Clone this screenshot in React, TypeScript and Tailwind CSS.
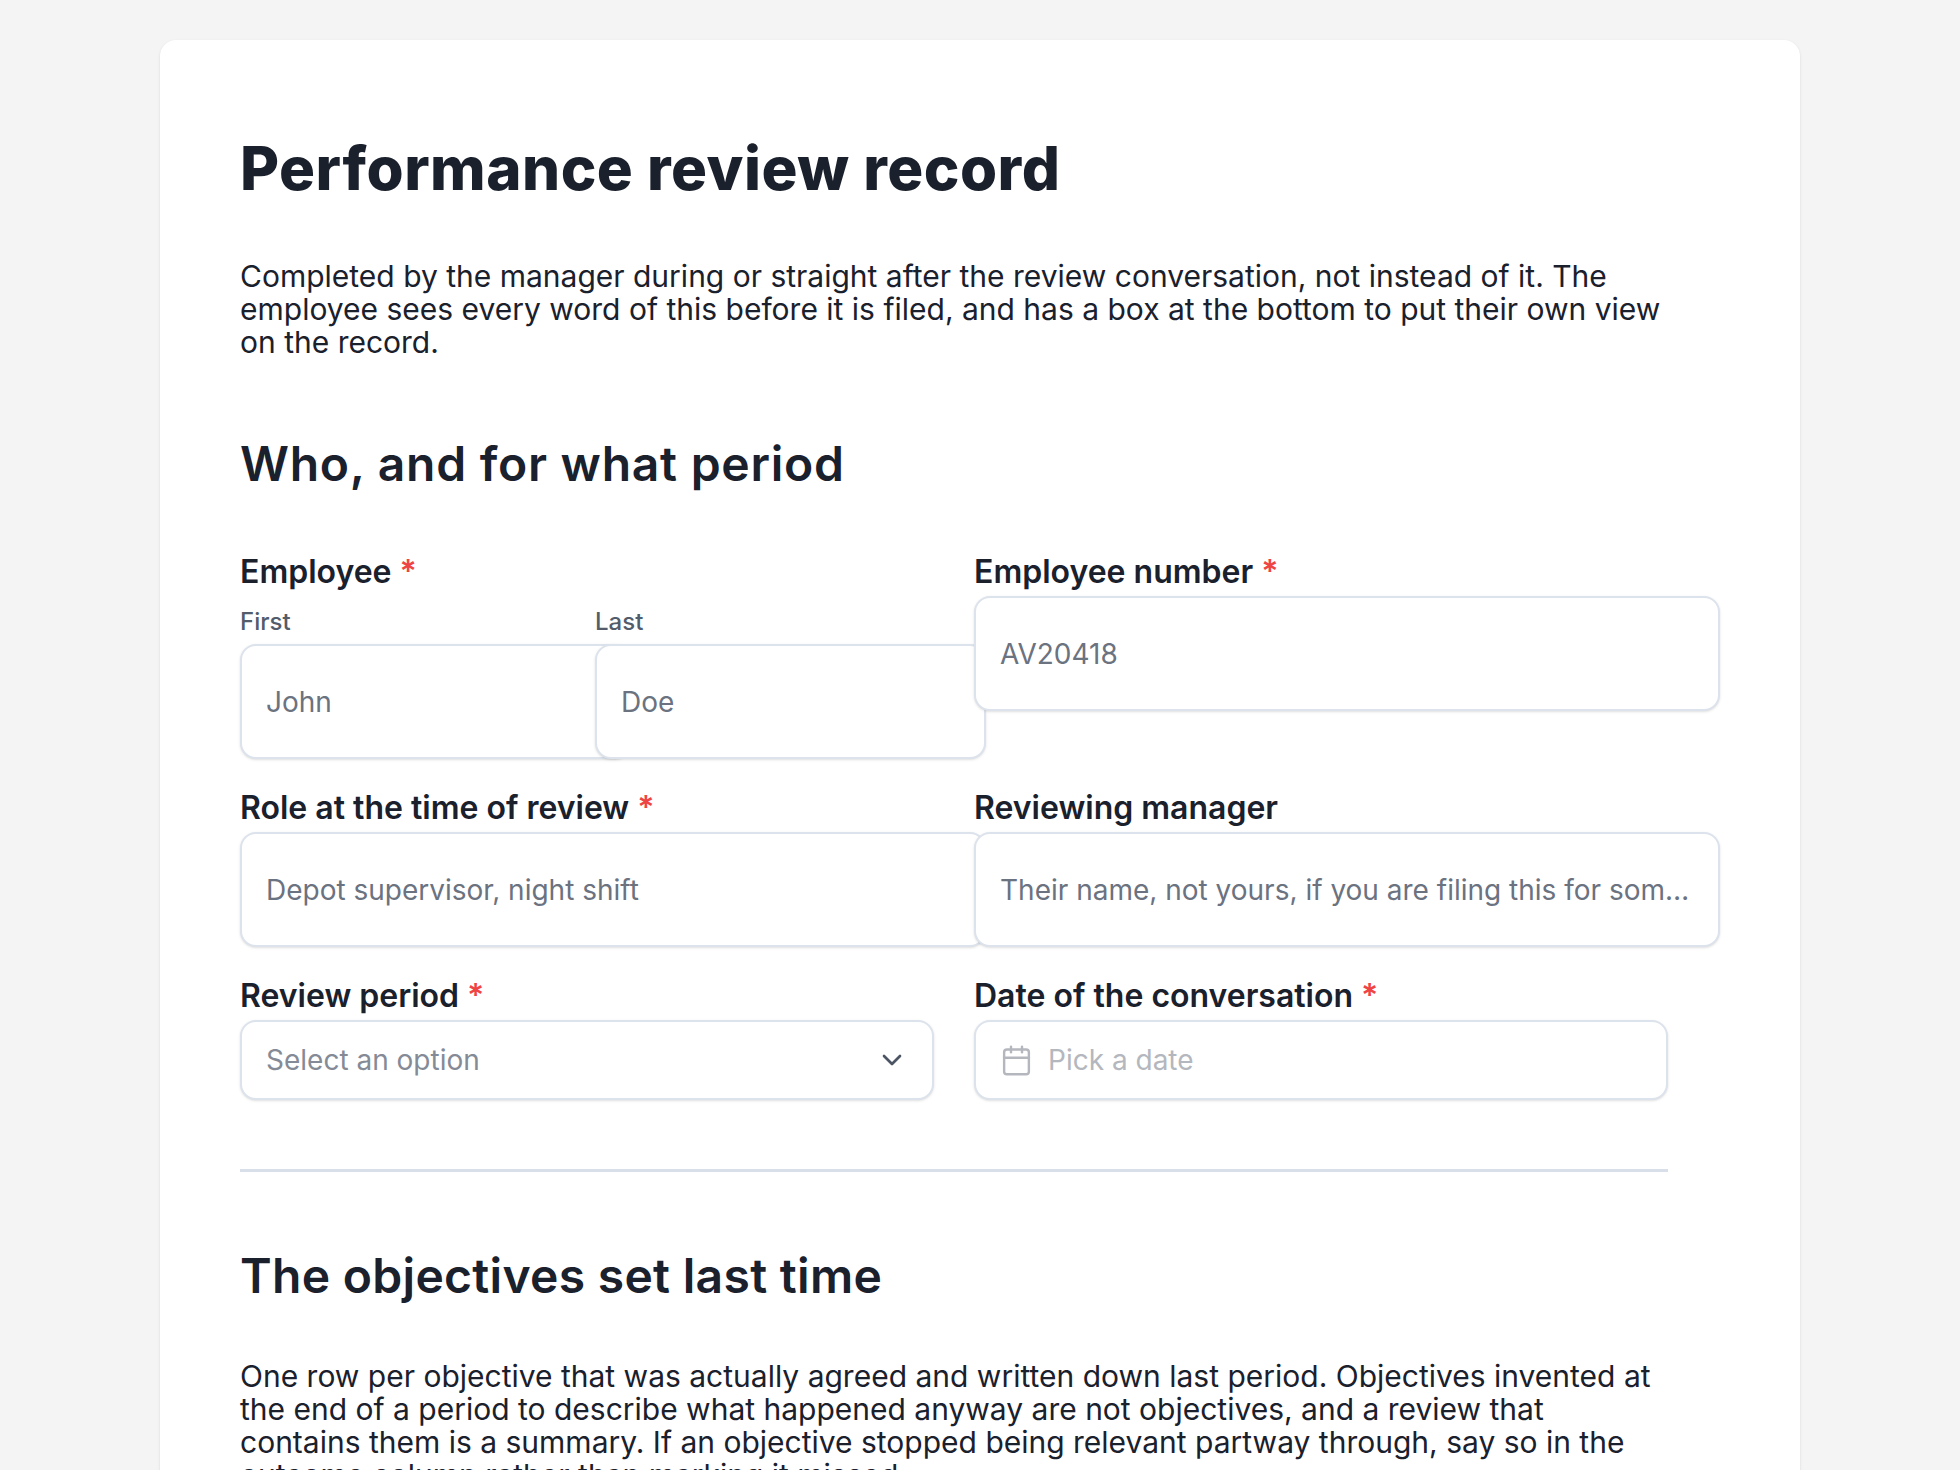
import React from "react";
import { Calendar, ChevronDown } from "lucide-react";

const inputClass =
  "block w-[calc(100%+52px)] h-[115px] px-[24px] bg-white border-2 border-[#dde3ec] rounded-[16px] shadow-sm text-[28px] text-[#1a202c] placeholder:text-[#6b7280] font-['Inter',sans-serif] outline-none";

function Label({ text, required }: { text: string; required?: boolean }) {
  return (
    <div className="h-[36px] text-[32px] leading-[36px] font-semibold text-[#1a202c]">
      {text}
      {required && <span className="ml-[8px] text-[#ef4444]">*</span>}
    </div>
  );
}

export default function App() {
  return (
    <div className="h-[1470px] overflow-hidden bg-[#f4f4f5] pt-10 font-['Inter',sans-serif]">
      <div className="ml-[160px] w-[1640px] rounded-[16px] bg-white px-20 pt-[92px] pb-20 shadow-sm">
        <h1 className="text-[60px] leading-[72px] font-extrabold tracking-[0.5px] text-[#1a202c]">
          Performance review record
        </h1>
        <p className="mt-[56px] w-[1428px] text-[30px] leading-[33px] text-[#1a202c]">
          Completed by the manager during or straight after the review conversation, not instead of it. The employee
          sees every word of this before it is filed, and has a box at the bottom to put their own view on the record.
        </p>
        <h2 className="mt-[76px] text-[48px] leading-[58px] font-semibold tracking-[0.75px] text-[#1a202c]">
          Who, and for what period
        </h2>

        <div className="mt-[61px] grid w-[1428px] grid-cols-2 gap-x-10 gap-y-[31px]">
          <div>
            <Label text="Employee" required />
            <div className="mt-[17px] grid grid-cols-2 gap-x-4">
              <div>
                <div className="mb-[7px] h-[30px] text-[24px] leading-[30px] font-medium text-[#525c6b]">First</div>
                <input className={inputClass} placeholder="John" />
              </div>
              <div>
                <div className="mb-[7px] h-[30px] text-[24px] leading-[30px] font-medium text-[#525c6b]">Last</div>
                <input className={inputClass} placeholder="Doe" />
              </div>
            </div>
          </div>
          <div>
            <Label text="Employee number" required />
            <input className={`${inputClass} mt-[6px]`} placeholder="AV20418" />
          </div>

          <div>
            <Label text="Role at the time of review" required />
            <input className={`${inputClass} mt-[6px]`} placeholder="Depot supervisor, night shift" />
          </div>
          <div>
            <Label text="Reviewing manager" />
            <input
              className={`${inputClass} mt-[6px] text-ellipsis`}
              placeholder="Their name, not yours, if you are filing this for someone else"
            />
          </div>

          <div>
            <Label text="Review period" required />
            <div className="mt-[6px] flex h-[80px] items-center justify-between rounded-[16px] border-2 border-[#dde3ec] bg-white pr-[24px] pl-[24px] shadow-sm">
              <span className="text-[28px] text-[#858b96]">Select an option</span>
              <ChevronDown size={32} strokeWidth={2} className="text-[#4b5563]" />
            </div>
          </div>
          <div>
            <Label text="Date of the conversation" required />
            <div className="mt-[6px] flex h-[80px] items-center rounded-[16px] border-2 border-[#dde3ec] bg-white pl-[24px] shadow-sm">
              <Calendar size={33} strokeWidth={1.75} className="text-[#b4b7bd]" />
              <span className="ml-[15px] text-[28px] text-[#b4b7bd]">Pick a date</span>
            </div>
          </div>
        </div>

        <hr className="mt-[69px] w-[1428px] border-0 border-t-[3px] border-[#d8dfe9]" />

        <h2 className="mt-[75px] text-[48px] leading-[58px] font-semibold tracking-[0.3px] text-[#1a202c]">
          The objectives set last time
        </h2>
        <p className="mt-[55px] w-[1428px] text-[30px] leading-[33px] text-[#1a202c]">
          One row per objective that was actually agreed and written down last period. Objectives invented at the end of
          a period to describe what happened anyway are not objectives, and a review that contains them is a summary. If
          an objective stopped being relevant partway through, say so in the outcome column rather than marking it
          missed.
        </p>
      </div>
    </div>
  );
}
